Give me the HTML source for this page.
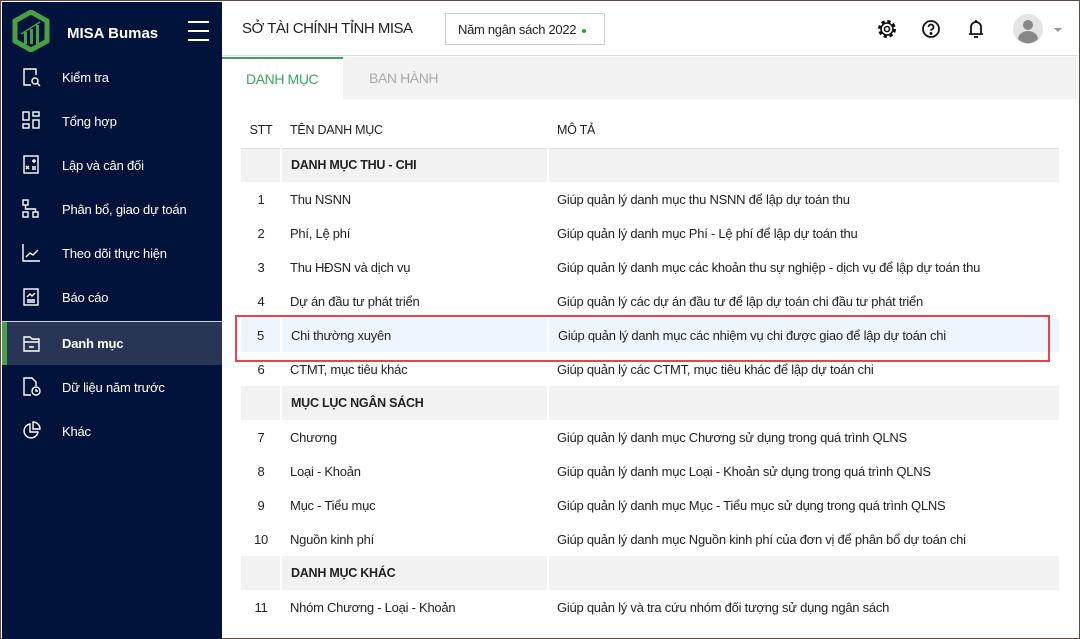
<!DOCTYPE html>
<html><head><meta charset="utf-8"><style>
*{box-sizing:border-box;margin:0;padding:0}
body{width:1080px;height:639px;overflow:hidden;font-family:"Liberation Sans",sans-serif;background:#fff;position:relative;border:1px solid #5a4a44}
.sb{position:absolute;left:1px;top:1px;width:220px;height:637px;background:#01133a;color:#fff}
.logo{position:absolute;left:10px;top:8px}
.brand{position:absolute;left:65px;top:23px;font-weight:bold;font-size:15px}
.ham{position:absolute;left:186px;top:19px;width:21px}
.ham i{display:block;height:2px;background:#fff;margin-bottom:7px}
.item{position:absolute;left:0;width:220px;height:44px;font-size:13px;display:flex;align-items:center;letter-spacing:-0.2px}
.item span{position:absolute;left:60px}
.item svg{position:absolute;left:20px}
.act{background:#293554;border-top:1px solid #ccd}
.act::before{content:"";position:absolute;left:0;top:0;bottom:0;width:5px;background:#4aa04a}
.top{position:absolute;left:221px;top:1px;right:1px;height:54px;border-bottom:1px solid #ddd;background:#fff}
.title{position:absolute;left:20px;top:18px;font-size:15px;color:#222;letter-spacing:-0.5px}
.year{position:absolute;left:223px;top:11px;width:160px;height:32px;border:1px solid #ccc;font-size:13px;padding:8px 12px;color:#222;letter-spacing:-0.3px}
.year b{display:inline-block;width:4px;height:4px;border-radius:50%;background:#2a2;margin-left:6px;vertical-align:middle}
.tabs{position:absolute;left:221px;top:56px;right:1px;height:42px;background:#f2f2f2}
.tab1{position:absolute;left:0;top:0;width:121px;height:42px;background:#fff;border-top:2px solid #3ba55c;color:#3ba55c;font-size:14px;padding-top:12px;padding-left:24px;letter-spacing:-0.4px}
.tab2{position:absolute;left:147px;top:13px;color:#aaa;font-size:14px;letter-spacing:-0.4px}
table{position:absolute;left:240px;top:111px;width:818px;border-collapse:collapse;font-size:13px;color:#222;letter-spacing:-0.25px}
td{height:34px;padding:0 9px;white-space:nowrap}
td:first-child{width:40px;text-align:center;padding:0}
td:nth-child(2){width:267px}
thead td{height:36px;border-bottom:1px solid #ddd;font-size:12.5px}
.g td{background:#f2f2f2;font-weight:bold;font-size:12.5px;border-left:2px solid #fff}
.g td:first-child{border-left:none}
.h td{background:#eef6fd;border-left:2px solid #fff}
.h td:first-child{border-left:none}
.red{position:absolute;left:234px;top:314px;width:815px;height:47px;border:2px solid #e8434a}
</style></head><body>
<div class="sb">
<svg class="logo" width="38" height="42" viewBox="0 0 38 42"><path d="M19 2L35 11V31L19 40L3 31V11Z" fill="none" stroke="#4aa043" stroke-width="5"/><rect x="12" y="22" width="3" height="12" fill="#4aa043"/><rect x="18" y="19" width="3" height="15" fill="#4aa043"/><rect x="24" y="15" width="3" height="19" fill="#4aa043"/><path d="M9 24L28 12" stroke="#4aa043" stroke-width="1.5"/></svg>
<div class="brand">MISA Bumas</div>
<div class="ham"><i></i><i></i><i></i></div>
<div class="item" style="top:53px"><svg width="20" height="20" fill="none" stroke="#fff" stroke-width="1.4"><path d="M14 8V2H2V18H9"/><circle cx="13" cy="14" r="3"/><path d="M15 16l3 3"/></svg><span>Kiểm tra</span></div>
<div class="item" style="top:97px"><svg width="20" height="20" fill="none" stroke="#fff" stroke-width="1.4"><rect x="1" y="1" width="6" height="8"/><rect x="11" y="1" width="6" height="4"/><rect x="1" y="13" width="6" height="4"/><rect x="11" y="9" width="6" height="8"/></svg><span>Tổng hợp</span></div>
<div class="item" style="top:141px"><svg width="20" height="20" fill="none" stroke="#fff" stroke-width="1.4"><rect x="2" y="1" width="14" height="17"/><path d="M10 6h4M12 4v4M4 11l3 3M7 11l-3 3M10 12h4M10 14h4"/></svg><span>Lập và cân đối</span></div>
<div class="item" style="top:185px"><svg width="20" height="20" fill="none" stroke="#fff" stroke-width="1.4"><rect x="1" y="1" width="5" height="5"/><rect x="1" y="13" width="5" height="5"/><rect x="11" y="13" width="5" height="5"/><path d="M3.5 6v4h10v3"/></svg><span>Phân bổ, giao dự toán</span></div>
<div class="item" style="top:229px"><svg width="20" height="20" fill="none" stroke="#fff" stroke-width="1.4"><path d="M1 1V18H18M4 14l4-4 3 2 5-5"/></svg><span>Theo dõi thực hiện</span></div>
<div class="item" style="top:273px"><svg width="20" height="20" fill="none" stroke="#fff" stroke-width="1.4"><rect x="2" y="2" width="14" height="16"/><path d="M5 10l3-3 2 2 3-3M5 13h8M5 15h8"/></svg><span>Báo cáo</span></div>
<div class="item act" style="top:319px;height:44px"><svg width="20" height="20" fill="none" stroke="#fff" stroke-width="1.4"><path d="M2 3h6l2 2h7v12H2Z M2 8h15M7 13h5"/></svg><span style="font-weight:bold">Danh mục</span></div>
<div class="item" style="top:363px"><svg width="20" height="20" fill="none" stroke="#fff" stroke-width="1.4"><path d="M9 18H2V1h8l4 4v4"/><circle cx="14" cy="14" r="4"/><path d="M14 12v2h2"/></svg><span>Dữ liệu năm trước</span></div>
<div class="item" style="top:407px"><svg width="20" height="20" fill="none" stroke="#fff" stroke-width="1.4"><path d="M8 3a7 7 0 1 0 8 8H8Z M11 1v7h7a7 7 0 0 0-7-7Z"/></svg><span>Khác</span></div>
</div>
<div class="top">
<div class="title">SỞ TÀI CHÍNH TỈNH MISA</div>
<div class="year">Năm ngân sách 2022<b></b></div>
<svg style="position:absolute;left:655px;top:17px" width="20" height="20" fill="none" stroke="#111"><circle cx="10" cy="10" r="7.5" stroke-width="3" stroke-dasharray="3.3 2.6"/><circle cx="10" cy="10" r="6" stroke-width="1.6"/><circle cx="10" cy="10" r="2.5" stroke-width="1.6"/></svg>
<svg style="position:absolute;left:699px;top:17px" width="20" height="20" fill="none" stroke="#111" stroke-width="1.8"><circle cx="10" cy="10" r="8"/><path d="M7.5 8a2.5 2.5 0 1 1 3.5 2.3c-.7.3-1 .8-1 1.5"/><circle cx="10" cy="14.5" r=".6" fill="#111"/></svg>
<svg style="position:absolute;left:744px;top:17px" width="20" height="20" fill="none" stroke="#111" stroke-width="1.8"><path d="M5 15V8a5 5 0 0 1 10 0v7ZM3 15h14M8 18h4M10 1v2"/></svg>
<svg style="position:absolute;left:790px;top:11px" width="32" height="32"><circle cx="16" cy="16" r="15" fill="#e4e4e4"/><circle cx="16" cy="12" r="5" fill="#888"/><path d="M6 26a10 8 0 0 1 20 0 14 14 0 0 1-20 0Z" fill="#888"/></svg>
<div style="position:absolute;left:832px;top:26px;border:4px solid transparent;border-top:4px solid #999"></div>
</div>
<div class="tabs"><div class="tab1">DANH MỤC</div><div class="tab2">BAN HÀNH</div></div>
<table>
<thead><tr><td>STT</td><td>TÊN DANH MỤC</td><td>MÔ TẢ</td></tr></thead>
<tr class="g"><td></td><td>DANH MỤC THU - CHI</td><td></td></tr>
<tr><td>1</td><td>Thu NSNN</td><td>Giúp quản lý danh mục thu NSNN để lập dự toán thu</td></tr>
<tr><td>2</td><td>Phí, Lệ phí</td><td>Giúp quản lý danh mục Phí - Lệ phí để lập dự toán thu</td></tr>
<tr><td>3</td><td>Thu HĐSN và dịch vụ</td><td>Giúp quản lý danh mục các khoản thu sự nghiệp - dịch vụ để lập dự toán thu</td></tr>
<tr><td>4</td><td>Dự án đầu tư phát triển</td><td>Giúp quản lý các dự án đầu tư để lập dự toán chi đầu tư phát triển</td></tr>
<tr class="h"><td>5</td><td>Chi thường xuyên</td><td>Giúp quản lý danh mục các nhiệm vụ chi được giao để lập dự toán chi</td></tr>
<tr><td>6</td><td>CTMT, mục tiêu khác</td><td>Giúp quản lý các CTMT, mục tiêu khác để lập dự toán chi</td></tr>
<tr class="g"><td></td><td>MỤC LỤC NGÂN SÁCH</td><td></td></tr>
<tr><td>7</td><td>Chương</td><td>Giúp quản lý danh mục Chương sử dụng trong quá trình QLNS</td></tr>
<tr><td>8</td><td>Loại - Khoản</td><td>Giúp quản lý danh mục Loại - Khoản sử dụng trong quá trình QLNS</td></tr>
<tr><td>9</td><td>Mục - Tiểu mục</td><td>Giúp quản lý danh mục Mục - Tiểu mục sử dụng trong quá trình QLNS</td></tr>
<tr><td>10</td><td>Nguồn kinh phí</td><td>Giúp quản lý danh mục Nguồn kinh phí của đơn vị để phân bổ dự toán chi</td></tr>
<tr class="g"><td></td><td>DANH MỤC KHÁC</td><td></td></tr>
<tr><td>11</td><td>Nhóm Chương - Loại - Khoản</td><td>Giúp quản lý và tra cứu nhóm đối tượng sử dụng ngân sách</td></tr>
</table>
<div class="red"></div>
</body></html>
